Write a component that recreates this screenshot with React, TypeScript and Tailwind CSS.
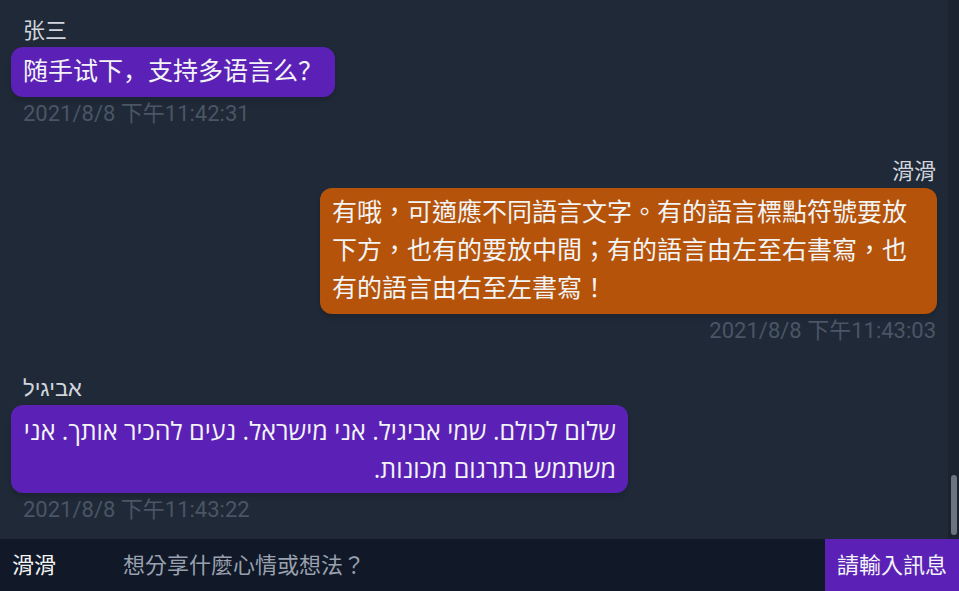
import React from 'react'

type Msg = {
  id: number
  name: string
  text: string
  time: string
  mine?: boolean
  rtl?: boolean
  font: string
  color: string
}

// ── 訊息資料 ───────────────────────────────────────────────────────────────

const MESSAGES: Msg[] = [
  {
    id: 1,
    name: '张三',
    text: '随手试下，支持多语言么？',
    time: '2021/8/8 下午11:42:31',
    font: "font-[Roboto,'Noto_Sans_CJK_SC',sans-serif]",
    color: 'bg-[#5b21b6]',
  },
  {
    id: 2,
    name: '滑滑',
    text: '有哦，可適應不同語言文字。有的語言標點符號要放下方，也有的要放中間；有的語言由左至右書寫，也有的語言由右至左書寫！',
    time: '2021/8/8 下午11:43:03',
    mine: true,
    font: "font-[Roboto,'Noto_Sans_CJK_TC',sans-serif]",
    color: 'bg-[#b45309]',
  },
  {
    id: 3,
    name: 'אביגיל',
    text: 'שלום לכולם. שמי אביגיל. אני מישראל. נעים להכיר אותך. אני משתמש בתרגום מכונות.',
    time: '2021/8/8 下午11:43:22',
    rtl: true,
    font: "font-['Open_Sans',Roboto,sans-serif]",
    color: 'bg-[#5b21b6]',
  },
]

function Message({ msg }: { msg: Msg }) {
  return (
    <div className={`flex flex-col ${msg.mine ? 'items-end' : 'items-start'}`}>
      <div
        className={`text-[22px] leading-[33px] text-gray-300 ${msg.mine ? 'pr-[1px]' : 'pl-[12px]'}`}
      >
        {msg.name}
      </div>
      <div
        dir={msg.rtl ? 'rtl' : 'ltr'}
        className={`max-w-[617px] rounded-[12px] px-[12px] py-[6px] text-[25px] leading-[38px] text-gray-100 shadow-md ${msg.color} ${msg.font}`}
      >
        {msg.text}
      </div>
      <div
        className={`text-[22px] leading-[33px] text-gray-600 ${msg.mine ? 'pr-[1px]' : 'pl-[12px]'}`}
      >
        {msg.time}
      </div>
    </div>
  )
}

export default function App() {
  return (
    <div className="flex h-screen w-full flex-col bg-[#1f2937] font-[Roboto,'Noto_Sans_CJK_TC',sans-serif]">
      {/* 訊息列表 + 捲軸 */}
      <div className="flex min-h-0 flex-1">
        <div className="flex flex-1 flex-col justify-end gap-[25px] overflow-hidden px-[11px] pb-[13px]">
          {MESSAGES.map((m) => (
            <Message key={m.id} msg={m} />
          ))}
        </div>
        <div className="flex w-[11px] flex-col justify-end bg-[#1b2330] pb-[4px]">
          <div className="mx-auto h-[60px] w-[6px] rounded-full bg-[#6b7280]" />
        </div>
      </div>

      {/* 輸入列 */}
      <div className="flex h-[52px] items-center bg-[#111827]">
        <div className="w-[111px] pl-[12px] text-[22px] text-gray-100">滑滑</div>
        <input
          className="h-full min-w-0 flex-1 bg-transparent pl-[12px] text-[22px] text-gray-100 outline-none placeholder:text-gray-400"
          placeholder="想分享什麼心情或想法？"
        />
        <button className="h-full bg-[#5b21b6] px-[12px] text-[22px] text-gray-100">請輸入訊息</button>
      </div>
    </div>
  )
}
